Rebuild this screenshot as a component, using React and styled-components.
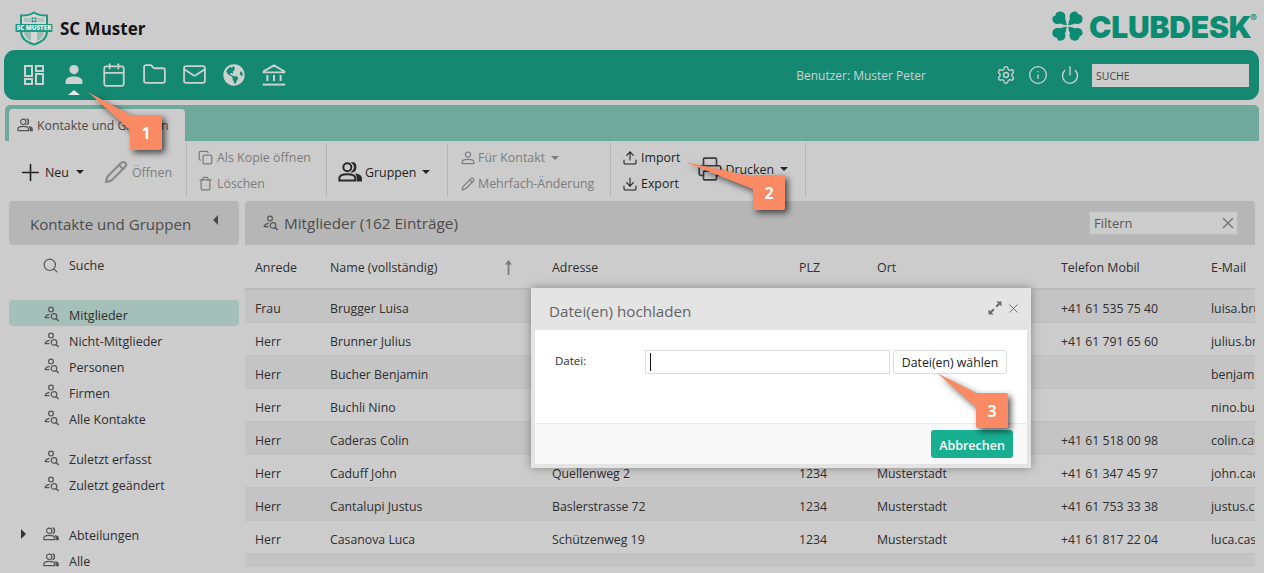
import React from 'react';
import styled, { createGlobalStyle } from 'styled-components';
import { Calendar, Folder, Mail, Settings, Info, Power, Plus, Pencil, Copy, Trash, Search, Upload, Download, Printer, X } from 'lucide-react';
import { FaGlobeAmericas } from 'react-icons/fa';

const GlobalStyle = createGlobalStyle`
  html, body {
    margin: 0;
    padding: 0;
    background: #cccccc;
  }
  * {
    box-sizing: border-box;
  }
`;

const contacts = [
  ['Frau', 'Brugger Luisa', 'Bahnhofstrasse 12', '1234', 'Musterstadt', '+41 61 535 75 40', 'luisa.brugger@example.ch'],
  ['Herr', 'Brunner Julius', 'Dorfstrasse 8', '1234', 'Musterstadt', '+41 61 791 65 60', 'julius.brunner@example.ch'],
  ['Herr', 'Bucher Benjamin', 'Hauptstrasse 4', '1234', 'Musterstadt', '', 'benjamin.bucher@example.ch'],
  ['Herr', 'Buchli Nino', 'Gartenweg 21', '1234', 'Musterstadt', '', 'nino.buchli@example.ch'],
  ['Herr', 'Caderas Colin', 'Seestrasse 7', '1234', 'Musterstadt', '+41 61 518 00 98', 'colin.caderas@example.ch'],
  ['Herr', 'Caduff John', 'Quellenweg 2', '1234', 'Musterstadt', '+41 61 347 45 97', 'john.caduff@example.ch'],
  ['Herr', 'Cantalupi Justus', 'Baslerstrasse 72', '1234', 'Musterstadt', '+41 61 753 33 38', 'justus.cantalupi@example.ch'],
  ['Herr', 'Casanova Luca', 'Schützenweg 19', '1234', 'Musterstadt', '+41 61 817 22 04', 'luca.casanova@example.ch'],
  ['Herr', 'Christen Marco', 'Rebgasse 5', '1234', 'Musterstadt', '+41 61 402 18 33', 'marco.christen@example.ch'],
];

const Page = styled.div`
  position: relative;
  width: 1264px;
  height: 573px;
  overflow: hidden;
  background: #cccccc;
  font-family: "Open Sans", "Liberation Sans", sans-serif;
  font-size: 12.5px;
  color: #2e2e2e;
`;

const Header = styled.header`
  height: 50px;
  display: flex;
  align-items: center;
  justify-content: space-between;
  padding: 6px 7px 0 15px;
`;

const Brand = styled.div`
  display: flex;
  align-items: center;
  gap: 7px;
  font-size: 17px;
  font-weight: 700;
  color: #121212;
`;

const ClubLogo = styled.div`
  display: flex;
  align-items: center;
  gap: 6px;
  color: #0b8b71;
  font-family: Inter, "Liberation Sans", sans-serif;
  font-weight: 900;
  font-size: 30px;
  letter-spacing: -0.2px;
  line-height: 30px;
  margin-top: -4px;

  sup {
    font-size: 10px;
    font-weight: 600;
    align-self: flex-start;
    line-height: 12px;
    margin-left: -7px;
    margin-top: 2px;
    letter-spacing: 0;
  }
`;

const LogoWord = styled.span`
  margin-top: 2px;
`;

const NavBar = styled.nav`
  height: 50px;
  margin: 0 5px 0 4px;
  border-radius: 11px;
  background: #158872;
  display: flex;
  align-items: center;
  padding: 0 10px 0 19px;
  color: #cdd2d0;
`;

const NavIcons = styled.div`
  display: flex;
  gap: 18px;
  align-items: center;
  margin-bottom: 1px;
`;

const NavIcon = styled.div`
  position: relative;
  width: 22px;
  height: 22px;
  display: flex;
  align-items: center;
  justify-content: center;

  svg {
    flex: none;
  }

  ${(p) => p.$active && `
    &::after {
      content: '';
      position: absolute;
      left: 5px;
      bottom: -9px;
      border-left: 6px solid transparent;
      border-right: 6px solid transparent;
      border-bottom: 5px solid #e4e8e6;
    }
  `}
`;

const NavRight = styled.div`
  margin-left: auto;
  display: flex;
  align-items: center;
`;

const UserLabel = styled.span`
  font-size: 12px;
  color: #c9d3d0;
  margin: 1px 70px 0 0;
`;

const NavTools = styled.div`
  display: flex;
  align-items: center;
  gap: 12px;
  margin-right: 12px;
`;

const SearchBox = styled.div`
  width: 157px;
  height: 23px;
  background: #cccccc;
  color: #454545;
  font-size: 10.5px;
  line-height: 25px;
  padding-left: 4px;
`;

const TabStrip = styled.div`
  height: 36px;
  margin: 5px 5px 0 5px;
  padding: 4px 0 0 4px;
  background: #6fa99c;
  border-radius: 5px 5px 0 0;
`;

const Tab = styled.div`
  width: 176px;
  height: 32px;
  background: #cccccc;
  border-radius: 4px 4px 0 0;
  display: flex;
  align-items: center;
  gap: 4px;
  padding-left: 8px;
  font-size: 12.3px;
  color: #4a4a4a;
  white-space: nowrap;
`;

const Toolbar = styled.div`
  height: 60px;
  display: flex;
  padding-left: 9px;
`;

const ToolGroup = styled.div`
  width: ${(p) => p.$width}px;
  height: 54px;
  margin-top: 2px;
  padding: ${(p) => p.$top || 0}px 0 0 ${(p) => p.$pad}px;
  border-right: 1px solid #b4b4b4;
  display: flex;
  align-items: center;
  gap: ${(p) => p.$gap || 0}px;
`;

const ToolStack = styled.div`
  display: flex;
  flex-direction: column;
  gap: 6px;
  margin-top: 1px;
`;

const ToolButton = styled.div`
  display: flex;
  align-items: center;
  height: 20px;
  gap: ${(p) => p.$gap ?? 4}px;
  margin-bottom: ${(p) => p.$lift || 0}px;
  font-size: 12.4px;
  white-space: nowrap;
  color: ${(p) => (p.$disabled ? '#7c7c7c' : '#1f1f1f')};
`;

const Caret = styled.span`
  display: inline-block;
  margin-left: ${(p) => p.$left ?? 6}px;
  border-left: 4px solid transparent;
  border-right: 4px solid transparent;
  border-top: 4px solid ${(p) => p.$color || '#222'};
`;

const Content = styled.div`
  display: flex;
  height: 366px;
  padding: 0 9px;
  gap: 6px;
`;

const Sidebar = styled.aside`
  width: 230px;
  flex: none;
`;

const SideHead = styled.div`
  height: 44px;
  background: #b6b6b6;
  border-radius: 4px;
  display: flex;
  align-items: center;
  justify-content: space-between;
  padding: 2px 21px 0 21px;
  font-size: 15.1px;
  color: #4c4c4c;
`;

const SideArrow = styled.span`
  margin-top: -8px;
  border-top: 5px solid transparent;
  border-bottom: 5px solid transparent;
  border-right: 5px solid #4a4a4a;
`;

const SideList = styled.div`
  padding-top: 7px;
`;

const SideItem = styled.div`
  position: relative;
  height: 26px;
  margin-bottom: ${(p) => p.$after || 0}px;
  display: flex;
  align-items: center;
  gap: ${(p) => p.$gap || 9}px;
  padding: ${(p) => (p.$flat ? 0 : 5)}px 0 0 ${(p) => p.$indent || 35}px;
  border-radius: 4px;
  background: ${(p) => (p.$active ? '#a5bfb9' : 'transparent')};
  color: #2e2e2e;

  svg {
    margin-top: ${(p) => (p.$flat ? 0 : -3)}px;
  }
`;

const ExpandArrow = styled.span`
  position: absolute;
  left: 12px;
  top: 9px;
  border-top: 5px solid transparent;
  border-bottom: 5px solid transparent;
  border-left: 5px solid #333;
`;

const Main = styled.main`
  flex: 1;
  overflow: hidden;
`;

const MainHead = styled.div`
  height: 44px;
  background: #b6b6b6;
  border-radius: 4px 4px 0 0;
  display: flex;
  align-items: center;
  gap: 5px;
  padding: 0 17px 0 18px;
  font-size: 15.3px;
  color: #4c4c4c;
`;

const FilterBox = styled.div`
  margin-left: auto;
  width: 149px;
  height: 24px;
  background: #cccccc;
  border: 1px solid #bcbcbc;
  display: flex;
  align-items: center;
  justify-content: space-between;
  padding: 0 0 0 4px;
  font-size: 13px;
  color: #585858;
`;

const Row = styled.div`
  display: grid;
  grid-template-columns: 75px 222px 247px 78px 184px 150px 1fr;
  height: 33px;
  align-items: center;
  padding: 5px 0 0 10px;
  white-space: nowrap;
  font-size: 12.3px;
  background: ${(p) => (p.$odd ? '#c4c4c4' : '#cccccc')};
  border-bottom: 1px solid #c0c0c0;

  & > * {
    overflow: hidden;
  }
`;

const HeadRow = styled(Row)`
  height: 45px;
  padding-top: 2px;
  font-size: 12.4px;
  background: #cccccc;
  border-bottom: 2px solid #bababa;
`;

const NameHead = styled.div`
  display: flex;
  align-items: center;
  justify-content: space-between;
  padding-right: 40px;
`;

const Modal = styled.div`
  position: absolute;
  left: 531px;
  top: 288px;
  width: 500px;
  height: 180px;
  background: #e4e4e4;
  padding: 0 4px 4px;
  display: flex;
  flex-direction: column;
  box-shadow: 0 0 9px rgba(0, 0, 0, 0.35);
`;

const ModalHead = styled.div`
  height: 42px;
  flex: none;
  display: flex;
  align-items: center;
  justify-content: space-between;
  padding: 4px 6px 0 14px;
  font-size: 15.2px;
  color: #646464;
`;

const ModalTools = styled.div`
  display: flex;
  align-items: center;
  gap: 4px;
  margin-top: -6px;
  color: #6c6c6c;
`;

const ModalBody = styled.div`
  flex: 1;
  background: #ffffff;
  display: flex;
  padding: 20px 20px 0 20px;
  align-items: flex-start;
`;

const FieldLabel = styled.label`
  width: 90px;
  height: 24px;
  line-height: 22px;
  font-size: 11.5px;
  color: #2b2b2b;
`;

const FileInput = styled.div`
  width: 245px;
  height: 24px;
  border: 1px solid #dcdcdc;
  padding: 2px 0 0 4px;

  &::before {
    content: '';
    display: block;
    width: 1px;
    height: 18px;
    background: #111;
  }
`;

const PickButton = styled.button`
  width: 114px;
  height: 24px;
  margin-left: 3px;
  padding: 0;
  background: #ffffff;
  border: 1px solid #dcdcdc;
  border-radius: 3px;
  font-family: inherit;
  font-size: 12.3px;
  color: #222;
`;

const ModalFoot = styled.div`
  height: 41px;
  flex: none;
  background: #f8f8f8;
  border-top: 1px solid #ececec;
  display: flex;
  justify-content: flex-end;
  padding: 6px 14px 0 0;
`;

const CancelButton = styled.button`
  width: 82px;
  height: 28px;
  border: none;
  padding: 2px 0 0;
  border-radius: 3px;
  background: #18ae90;
  color: #ffffff;
  font-family: inherit;
  font-size: 12.5px;
  font-weight: 600;
`;

const CalloutBox = styled.div`
  position: absolute;
  left: ${(p) => p.$x}px;
  top: ${(p) => p.$y}px;
  width: 32px;
  height: 35px;
  background: #f98a63;
  border-radius: 2px;
  display: flex;
  align-items: center;
  justify-content: center;
  color: #ffffff;
  font-size: 16px;
  font-weight: 700;
`;

const CalloutLayer = styled.div`
  position: absolute;
  inset: 0;
  filter: drop-shadow(3px 3px 3px rgba(0, 0, 0, 0.65));
  pointer-events: none;
`;

const PointerSvg = styled.svg`
  position: absolute;
  left: 0;
  top: 0;
`;

const ContactSearchIcon = () => (
  <svg width="16" height="16" viewBox="0 0 16 16" fill="none" stroke="#555" strokeWidth="1.2">
    <circle cx="7" cy="3.6" r="2.4" />
    <path d="M1.2 10.8 C2.6 9 4 8.6 5.6 8.4 M1.2 10.8 V11.6 H5.4" />
    <circle cx="10" cy="10.4" r="2.8" />
    <path d="M12.1 12.5 L14.6 15" strokeWidth="1.5" />
  </svg>
);

const GroupIcon = ({ size = 16, color = '#555', width = 1.3 }) => (
  <svg width={size} height={size} viewBox="0 0 18 16" fill="none" stroke={color} strokeWidth={width}>
    <circle cx="7" cy="4.4" r="3" />
    <path d="M1 14.4 V12.6 C1 10.4 3.4 9.6 7 9.6 C10.6 9.6 13 10.4 13 12.6 V14.4 Z" />
    <path d="M11.4 1.4 C13.6 1.6 13.6 7 11.4 7.4 C13 5.6 13 3 11.4 1.4 Z" fill={color} />
    <path d="M14.2 10 C16 10.4 17.2 11.4 17.2 12.6 V14.4 H14.8 V12.6 C14.8 11.6 14.6 10.8 14.2 10 Z" fill={color} />
  </svg>
);

const OutlinePerson = () => (
  <svg width="14" height="14" viewBox="0 0 14 14" fill="none" stroke="#7c7c7c" strokeWidth="1.2">
    <circle cx="7" cy="3.6" r="2.6" />
    <path d="M1.2 12.6 V11 C1.2 9.2 3.4 8.4 7 8.4 C10.6 8.4 12.8 9.2 12.8 11 V12.6 Z" />
  </svg>
);

const DashboardIcon = () => (
  <svg width="22" height="22" viewBox="0 0 22 22" fill="none" stroke="currentColor" strokeWidth="2">
    <rect x="2" y="2" width="7" height="10" />
    <rect x="13" y="2" width="7" height="5" />
    <rect x="2" y="15" width="7" height="5" />
    <rect x="13" y="10" width="7" height="10" />
  </svg>
);

const PersonIcon = () => (
  <svg width="22" height="22" viewBox="0 0 22 22" fill="currentColor">
    <circle cx="11" cy="5.6" r="4.6" />
    <path d="M2.6 20 V17.4 C2.6 14 6 12.4 11 12.4 C16 12.4 19.4 14 19.4 17.4 V20 Z" />
  </svg>
);

const BankIcon = () => (
  <svg width="24" height="22" viewBox="0 0 24 22" fill="none" stroke="currentColor" strokeWidth="1.8">
    <path d="M1.6 7.4 L12 1.4 L22.4 7.4 V8.4 H1.6 Z" />
    <path d="M5.4 11 V17 M12 11 V17 M18.6 11 V17" strokeWidth="2" />
    <path d="M0.8 20.6 H23.2" strokeWidth="2" />
  </svg>
);

const ExpandIcon = () => (
  <svg width="14" height="14" viewBox="0 0 15 15" fill="currentColor">
    <path d="M14.5 0.5 L14.5 6 L12.6 4.1 L9.6 7 L8 5.4 L10.9 2.4 L9 0.5 Z" />
    <path d="M0.5 14.5 L0.5 9 L2.4 10.9 L5.4 8 L7 9.6 L4.1 12.6 L6 14.5 Z" />
  </svg>
);

const ShieldLogo = () => (
  <svg width="38" height="35" viewBox="0 0 38 35">
    <path d="M6 4.5 C12 4.5 16 3.5 19 1.5 C22 3.5 26 4.5 32 4.5 V20 C32 27 26 31.5 19 33.5 C12 31.5 6 27 6 20 Z" fill="#d6d6d6" stroke="#1f9a80" strokeWidth="2" />
    <path d="M9 7 H16 V11 H9 Z M22 7 H29 V11 H22 Z" fill="#b4c4bf" />
    <path d="M9 21 C10 26 13 29 16 30 V21 Z" fill="#9dbcb3" />
    <path d="M22 21 V30 C25 29 28 26 29 21 Z" fill="#9dbcb3" />
    <path d="M16.6 6.4 h1.9 v1.9 h-1.9 z M19.5 6.4 h1.9 v1.9 h-1.9 z M16.6 9.3 h1.9 v1.9 h-1.9 z M19.5 9.3 h1.9 v1.9 h-1.9 z" fill="#158872" />
    <rect x="0.5" y="13" width="37" height="8" rx="1" fill="#1f9a80" />
    <text x="19" y="19.4" textAnchor="middle" fontFamily="Open Sans, sans-serif" fontWeight="800" fontSize="6.2" fill="#f2f2f2">SC MUSTER</text>
  </svg>
);

const LEAF = 'M-0.8 -0.8 C-1.2 -4 -1.6 -6 -2.6 -8 C-1.6 -9.5 -1.8 -15.4 -7.5 -15.6 C-11 -15.6 -12.6 -13 -12.4 -11 C-12.8 -10.8 -15.6 -10.6 -15.6 -7.5 C-15.4 -1.8 -9.5 -1.6 -8 -2.6 C-6 -1.6 -4 -1.2 -0.8 -0.8 Z';

const Clover = () => (
  <svg width="31" height="30" viewBox="-16 -16 32 32" preserveAspectRatio="none" fill="#0b8b71">
    {[0, 90, 180, 270].map((r) => (
      <path key={r} d={LEAF} transform={`rotate(${r})`} />
    ))}
  </svg>
);

const Callout = ({ n, x, y, points }) => (
  <>
    <PointerSvg width="1264" height="573">
      <polygon points={points} fill="#f98a63" />
    </PointerSvg>
    <CalloutBox $x={x} $y={y}>{n}</CalloutBox>
  </>
);

const sideTop = [
  ['Mitglieder', 0, true],
  ['Nicht-Mitglieder', 0],
  ['Personen', 0],
  ['Firmen', 0],
  ['Alle Kontakte', 14],
  ['Zuletzt erfasst', 0],
  ['Zuletzt geändert', 24],
];

export default function App() {
  return (
    <Page>
      <GlobalStyle />
      <Header>
        <Brand>
          <ShieldLogo />
          SC Muster
        </Brand>
        <ClubLogo>
          <Clover />
          <LogoWord>CLUBDESK</LogoWord>
          <sup>®</sup>
        </ClubLogo>
      </Header>

      <NavBar>
        <NavIcons>
          <NavIcon><DashboardIcon /></NavIcon>
          <NavIcon $active><PersonIcon /></NavIcon>
          <NavIcon><Calendar size={26} strokeWidth={1.6} /></NavIcon>
          <NavIcon><Folder size={25} strokeWidth={1.7} /></NavIcon>
          <NavIcon><Mail size={25} strokeWidth={1.7} /></NavIcon>
          <NavIcon><FaGlobeAmericas size={22} /></NavIcon>
          <NavIcon><BankIcon /></NavIcon>
        </NavIcons>
        <NavRight>
          <UserLabel>Benutzer: Muster Peter</UserLabel>
          <NavTools>
            <Settings size={20} strokeWidth={1.6} />
            <Info size={20} strokeWidth={1.6} />
            <Power size={20} strokeWidth={1.6} />
          </NavTools>
          <SearchBox>SUCHE</SearchBox>
        </NavRight>
      </NavBar>

      <TabStrip>
        <Tab>
          <GroupIcon />
          Kontakte und Gruppen
        </Tab>
      </TabStrip>

      <Toolbar>
        <ToolGroup $width={178} $pad={8} $gap={20} $top={4}>
          <ToolButton $gap={1}>
            <Plus size={27} strokeWidth={1.4} />
            Neu
            <Caret $left={6} />
          </ToolButton>
          <ToolButton $disabled $gap={4}>
            <Pencil size={24} color="#8a8a8a" strokeWidth={2.2} />
            Öffnen
          </ToolButton>
        </ToolGroup>
        <ToolGroup $width={140} $pad={11}>
          <ToolStack>
            <ToolButton $disabled><Copy size={15} />Als Kopie öffnen</ToolButton>
            <ToolButton $disabled><Trash size={15} />Löschen</ToolButton>
          </ToolStack>
        </ToolGroup>
        <ToolGroup $width={121} $pad={11} $top={4}>
          <ToolButton $gap={3}>
            <GroupIcon size={24} color="#2a2a2a" width={1.5} />
            Gruppen
            <Caret $left={3} />
          </ToolButton>
        </ToolGroup>
        <ToolGroup $width={163} $pad={13}>
          <ToolStack>
            <ToolButton $disabled $gap={3}><OutlinePerson />Für Kontakt<Caret $left={3} $color="#7c7c7c" /></ToolButton>
            <ToolButton $disabled $gap={3}><Pencil size={14} />Mehrfach-Änderung</ToolButton>
          </ToolStack>
        </ToolGroup>
        <ToolGroup $width={195} $pad={11} $gap={17}>
          <ToolStack>
            <ToolButton $gap={3}><Upload size={16} strokeWidth={1.6} />Import</ToolButton>
            <ToolButton $gap={3}><Download size={16} strokeWidth={1.6} />Export</ToolButton>
          </ToolStack>
          <ToolButton $gap={2} $lift={2}>
            <Printer size={26} strokeWidth={1.5} color="#3a3a3a" />
            Drucken
            <Caret $left={4} />
          </ToolButton>
        </ToolGroup>
      </Toolbar>

      <Content>
        <Sidebar>
          <SideHead>
            Kontakte und Gruppen
            <SideArrow />
          </SideHead>
          <SideList>
            <SideItem $after={22} $flat $indent={33} $gap={10}>
              <Search size={17} color="#555" strokeWidth={1.6} />
              Suche
            </SideItem>
            {sideTop.map(([label, after, active]) => (
              <SideItem key={label} $after={after} $active={active}>
                <ContactSearchIcon />
                {label}
              </SideItem>
            ))}
            <SideItem $indent={34} $gap={10}>
              <ExpandArrow />
              <GroupIcon />
              <span>Abteilungen</span>
            </SideItem>
            <SideItem $indent={34} $gap={10}>
              <GroupIcon />
              Alle
            </SideItem>
          </SideList>
        </Sidebar>

        <Main>
          <MainHead>
            <ContactSearchIcon />
            Mitglieder (162 Einträge)
            <FilterBox>
              Filtern
              <X size={18} color="#777" strokeWidth={2} />
            </FilterBox>
          </MainHead>
          <HeadRow>
            <div>Anrede</div>
            <NameHead>
              Name (vollständig)
              <svg width="7" height="17" viewBox="0 0 8 17" fill="#7a7a7a">
                <path d="M4 0 L8 5 H5 V17 H3 V5 H0 Z" />
              </svg>
            </NameHead>
            <div>Adresse</div>
            <div>PLZ</div>
            <div>Ort</div>
            <div>Telefon Mobil</div>
            <div>E-Mail</div>
          </HeadRow>
          {contacts.map((c, i) => (
            <Row key={c[1]} $odd={i % 2 === 0}>
              {c.map((v, j) => <div key={j}>{v}</div>)}
            </Row>
          ))}
        </Main>
      </Content>

      <Modal>
        <ModalHead>
          Datei(en) hochladen
          <ModalTools>
            <ExpandIcon />
            <X size={15} strokeWidth={1.5} />
          </ModalTools>
        </ModalHead>
        <ModalBody>
          <FieldLabel>Datei:</FieldLabel>
          <FileInput />
          <PickButton>Datei(en) wählen</PickButton>
        </ModalBody>
        <ModalFoot>
          <CancelButton>Abbrechen</CancelButton>
        </ModalFoot>
      </Modal>

      <CalloutLayer>
        <Callout n="1" x={130} y={115} points="88,92 132,116 132,132" />
        <Callout n="2" x={753} y={175} points="685,162 755,177 755,190" />
        <Callout n="3" x={976} y={393} points="937,373 978,394 978,409" />
      </CalloutLayer>
    </Page>
  );
}
